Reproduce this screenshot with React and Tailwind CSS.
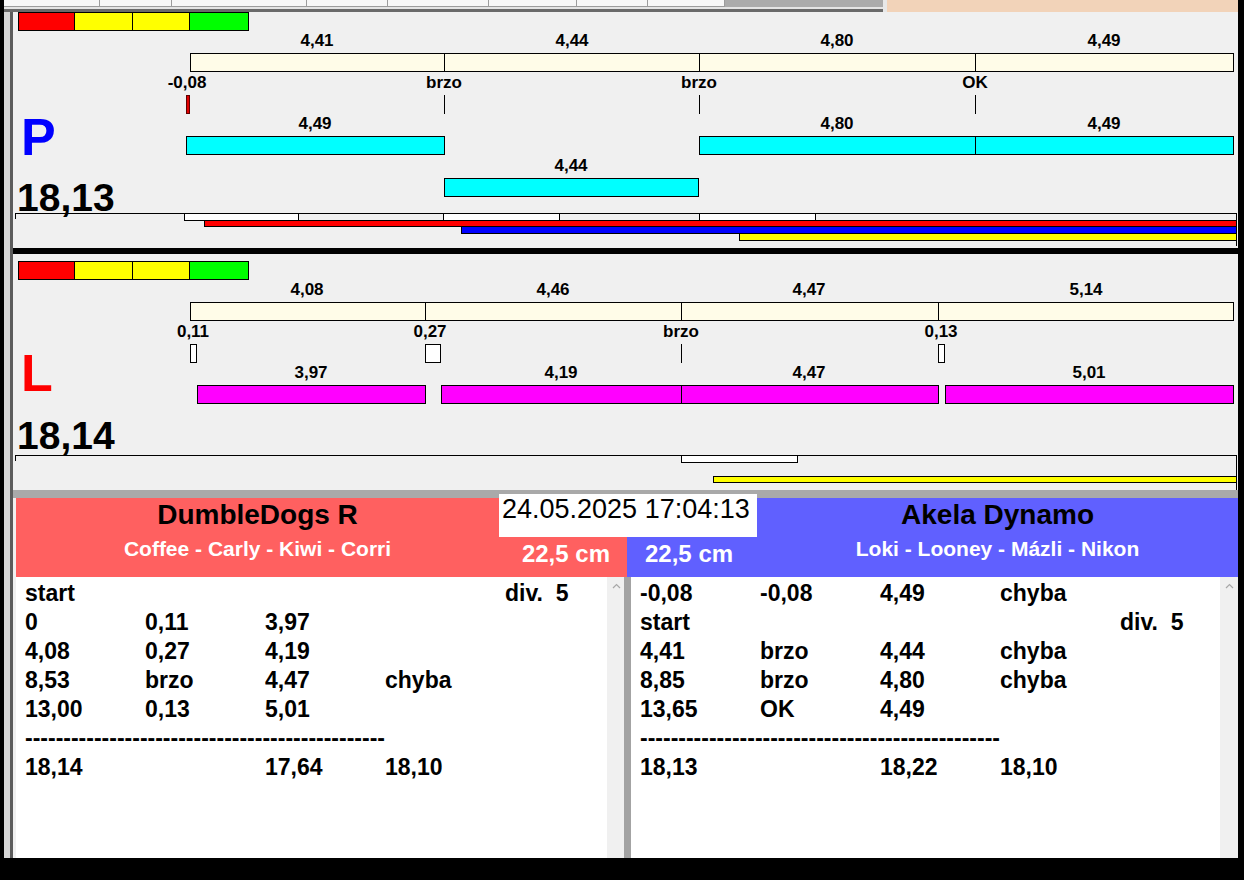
import React from 'react';

// chart panels use page coordinates, shifted by the panel origin
const X0 = 13;

const P_PANEL = {
  y0: 12,
  rects: [
    { x1: 190, x2: 445, y1: 53, y2: 72, c: 'bg-[#fffce8]' },
    { x1: 444, x2: 700, y1: 53, y2: 72, c: 'bg-[#fffce8]' },
    { x1: 699, x2: 976, y1: 53, y2: 72, c: 'bg-[#fffce8]' },
    { x1: 975, x2: 1234, y1: 53, y2: 72, c: 'bg-[#fffce8]' },
    { x1: 186, x2: 190, y1: 95, y2: 114, c: 'bg-[#e00000]', b: 'border border-[#600000]' },
    { x1: 186, x2: 445, y1: 136, y2: 155, c: 'bg-[#00ffff]' },
    { x1: 699, x2: 976, y1: 136, y2: 155, c: 'bg-[#00ffff]' },
    { x1: 975, x2: 1234, y1: 136, y2: 155, c: 'bg-[#00ffff]' },
    { x1: 444, x2: 699, y1: 178, y2: 197, c: 'bg-[#00ffff]' },
    { x1: 15, x2: 1237, y1: 213, y2: 246, b: 'border-t border-r border-black' },
    { x1: 184, x2: 299, y1: 213, y2: 221, c: 'bg-white' },
    { x1: 443, x2: 560, y1: 213, y2: 221, c: 'bg-white' },
    { x1: 699, x2: 816, y1: 213, y2: 221, c: 'bg-white' },
    { x1: 204, x2: 1237, y1: 220, y2: 227, c: 'bg-[#ff0000]' },
    { x1: 461, x2: 1237, y1: 226, y2: 234, c: 'bg-[#0000ff]' },
    { x1: 739, x2: 1237, y1: 233, y2: 241, c: 'bg-[#ffff00]' },
  ],
  ticks: [
    { x: 444, y1: 95, y2: 114 },
    { x: 699, y1: 95, y2: 114 },
    { x: 975, y1: 95, y2: 114 },
    { x: 15, y1: 213, y2: 219 },
  ],
  labels: [
    { x: 317, y: 40, t: '4,41' },
    { x: 572, y: 40, t: '4,44' },
    { x: 837, y: 40, t: '4,80' },
    { x: 1104, y: 40, t: '4,49' },
    { x: 187, y: 82, t: '-0,08' },
    { x: 444, y: 82, t: 'brzo' },
    { x: 699, y: 82, t: 'brzo' },
    { x: 975, y: 82, t: 'OK' },
    { x: 315, y: 123, t: '4,49' },
    { x: 837, y: 123, t: '4,80' },
    { x: 1104, y: 123, t: '4,49' },
    { x: 571, y: 165, t: '4,44' },
  ],
};

const L_PANEL = {
  y0: 254,
  rects: [
    { x1: 190, x2: 426, y1: 302, y2: 321, c: 'bg-[#fffce8]' },
    { x1: 425, x2: 682, y1: 302, y2: 321, c: 'bg-[#fffce8]' },
    { x1: 681, x2: 939, y1: 302, y2: 321, c: 'bg-[#fffce8]' },
    { x1: 938, x2: 1234, y1: 302, y2: 321, c: 'bg-[#fffce8]' },
    { x1: 190, x2: 197, y1: 344, y2: 363, c: 'bg-white' },
    { x1: 425, x2: 441, y1: 344, y2: 363, c: 'bg-white' },
    { x1: 938, x2: 945, y1: 344, y2: 363, c: 'bg-white' },
    { x1: 197, x2: 426, y1: 385, y2: 404, c: 'bg-[#ff00ff]' },
    { x1: 441, x2: 682, y1: 385, y2: 404, c: 'bg-[#ff00ff]' },
    { x1: 681, x2: 939, y1: 385, y2: 404, c: 'bg-[#ff00ff]' },
    { x1: 945, x2: 1234, y1: 385, y2: 404, c: 'bg-[#ff00ff]' },
    { x1: 15, x2: 1237, y1: 455, y2: 490, b: 'border-t border-r border-black' },
    { x1: 681, x2: 798, y1: 455, y2: 463, c: 'bg-white' },
    { x1: 713, x2: 1237, y1: 476, y2: 483, c: 'bg-[#ffff00]' },
  ],
  ticks: [
    { x: 681, y1: 344, y2: 363 },
    { x: 15, y1: 455, y2: 461 },
  ],
  labels: [
    { x: 307, y: 289, t: '4,08' },
    { x: 553, y: 289, t: '4,46' },
    { x: 809, y: 289, t: '4,47' },
    { x: 1086, y: 289, t: '5,14' },
    { x: 193, y: 331, t: '0,11' },
    { x: 430, y: 331, t: '0,27' },
    { x: 681, y: 331, t: 'brzo' },
    { x: 941, y: 331, t: '0,13' },
    { x: 311, y: 372, t: '3,97' },
    { x: 561, y: 372, t: '4,19' },
    { x: 809, y: 372, t: '4,47' },
    { x: 1089, y: 372, t: '5,01' },
  ],
};

const DASHES = '-'.repeat(47);

const LEFT_ROWS = [
  ['start', '', '', '', 'div.  5'],
  ['0', '0,11', '3,97'],
  ['4,08', '0,27', '4,19'],
  ['8,53', 'brzo', '4,47', 'chyba'],
  ['13,00', '0,13', '5,01'],
  [DASHES],
  ['18,14', '', '17,64', '18,10'],
];

const RIGHT_ROWS = [
  ['-0,08', '-0,08', '4,49', 'chyba'],
  ['start', '', '', '', 'div.  5'],
  ['4,41', 'brzo', '4,44', 'chyba'],
  ['8,85', 'brzo', '4,80', 'chyba'],
  ['13,65', 'OK', '4,49'],
  [DASHES],
  ['18,13', '', '18,22', '18,10'],
];

const TABS = [96, 72, 135, 81, 101, 88, 71, 77];

function Rect({ r, y0 }) {
  return (
    <div
      className={`absolute ${r.b || 'border border-black'} ${r.c || ''}`}
      style={{ left: r.x1 - X0, top: r.y1 - y0, width: r.x2 - r.x1, height: r.y2 - r.y1 }}
    />
  );
}

function ColorBar({ className }) {
  return (
    <div className={`absolute left-[5px] flex h-[19px] w-[231px] border border-black ${className}`}>
      <div className="w-[56px] border-r border-black bg-[#ff0000]" />
      <div className="w-[58px] border-r border-black bg-[#ffff00]" />
      <div className="w-[57px] border-r border-black bg-[#ffff00]" />
      <div className="flex-1 bg-[#00ff00]" />
    </div>
  );
}

function ChartPanel({ data, children }) {
  const { y0 } = data;
  return (
    <div className="relative h-[236px] overflow-hidden bg-[#f0f0f0]">
      {data.rects.map((r, i) => (
        <Rect key={i} r={r} y0={y0} />
      ))}
      {data.ticks.map((t, i) => (
        <div
          key={i}
          className="absolute w-px bg-black"
          style={{ left: t.x - X0, top: t.y1 - y0, height: t.y2 - t.y1 }}
        />
      ))}
      {data.labels.map((l, i) => (
        <div
          key={i}
          className="absolute -translate-x-1/2 whitespace-nowrap text-[17px] font-bold leading-none text-black"
          style={{ left: l.x - X0, top: l.y - 8 - y0 }}
        >
          {l.t}
        </div>
      ))}
      {children}
    </div>
  );
}

function ScrollUp() {
  return (
    <svg width="9" height="6" viewBox="0 0 9 6" className="mt-[6px] ml-[1px]">
      <path d="M1 5 L4.5 1.5 L8 5" fill="none" stroke="#a8a8a8" strokeWidth="1.2" />
    </svg>
  );
}

function ResultList({ rows, className }) {
  return (
    <div className={`bg-white pl-[9px] pt-[2px] text-[23px] font-bold text-black ${className}`}>
      {rows.map((row, i) => (
        <div key={i} className="flex h-[29px] leading-[29px]">
          {row.length === 1 ? (
            <span className="whitespace-pre">{row[0]}</span>
          ) : (
            row.map((cell, j) => (
              <span key={j} className="w-[120px] shrink-0 whitespace-pre">
                {cell}
              </span>
            ))
          )}
        </div>
      ))}
    </div>
  );
}

export default function App() {
  return (
    <div className="flex h-[880px] w-[1244px] flex-col overflow-hidden bg-black font-['Liberation_Sans',Arial,sans-serif]">
      <div className="flex h-[858px]">
        <div className="w-[4px]" />
        <div className="flex w-[1234px] flex-col">
          {/* tab strip of the window */}
          <div className="flex h-[12px]">
            <div className="flex w-[879px] flex-col">
              <div className="flex h-[7px]">
                <div className="flex border-b border-[#9c9c9c] bg-[#f7f7f7]">
                  {TABS.map((w, i) => (
                    <div key={i} className="border-r border-[#9c9c9c]" style={{ width: w }} />
                  ))}
                </div>
                <div className="flex-1 bg-[#ababab]" />
              </div>
              <div className="h-[2px] bg-[#e4e4e4]" />
              <div className="h-[3px] bg-[#6a6a6a]" />
            </div>
            <div className="w-[4px] bg-[#e8e8e8]" />
            <div className="flex-1 bg-[#f2d3b9]" />
          </div>

          <div className="flex flex-1">
            <div className="w-[6px] bg-[#d6d6d6]" />
            <div className="w-[3px] bg-[#5c5c5c]" />
            <div className="flex w-[1225px] flex-col">
              <ChartPanel data={P_PANEL}>
                <ColorBar className="top-0" />
                <div className="absolute left-[8px] top-[99px] text-[52px] font-bold leading-none text-[#0000ff]">P</div>
                <div className="absolute left-[4px] top-[166px] text-[39px] font-bold leading-none text-black">18,13</div>
              </ChartPanel>
              <div className="h-[6px] bg-black" />
              <ChartPanel data={L_PANEL}>
                <ColorBar className="top-[7px]" />
                <div className="absolute left-[8px] top-[93px] text-[52px] font-bold leading-none text-[#ff0000]">L</div>
                <div className="absolute left-[4px] top-[162px] text-[39px] font-bold leading-none text-black">18,14</div>
              </ChartPanel>
              <div className="h-[8px] bg-[#a9a9a9]" />

              <div className="flex flex-1 flex-col bg-[#f0f0f0] pl-[3px]">
                {/* team headers */}
                <div className="relative flex h-[79px]">
                  <div className="flex w-[611px] bg-[#ff6060]">
                    <div className="flex w-[483px] flex-col items-center pt-[1px]">
                      <div className="text-[28px] font-bold leading-[32px] text-black">DumbleDogs R</div>
                      <div className="mt-[6px] text-[21px] font-bold leading-[24px] text-white">Coffee - Carly - Kiwi - Corri</div>
                    </div>
                    <div className="flex-1 pr-[17px] pt-[42px] text-right text-[24px] font-bold leading-[28px] text-white">22,5 cm</div>
                  </div>
                  <div className="flex flex-1 bg-[#6060ff]">
                    <div className="w-[130px] pl-[18px] pt-[42px] text-[24px] font-bold leading-[28px] text-white">22,5 cm</div>
                    <div className="flex flex-1 flex-col items-center pt-[1px]">
                      <div className="text-[28px] font-bold leading-[32px] text-black">Akela Dynamo</div>
                      <div className="mt-[6px] text-[21px] font-bold leading-[24px] text-white">Loki - Looney - Mázli - Nikon</div>
                    </div>
                  </div>
                  <div className="absolute left-[483px] top-[-4px] h-[43px] w-[258px] bg-white pl-[3px] text-[27px] leading-[30px] text-black">
                    24.05.2025 17:04:13
                  </div>
                </div>

                {/* result lists */}
                <div className="flex flex-1">
                  <ResultList rows={LEFT_ROWS} className="w-[591px]" />
                  <div className="flex w-[17px] justify-center bg-[#f0f0f0]">
                    <ScrollUp />
                  </div>
                  <div className="w-[7px] bg-[#a3a3a3]" />
                  <ResultList rows={RIGHT_ROWS} className="w-[589px]" />
                  <div className="flex flex-1 justify-center bg-[#f0f0f0]">
                    <ScrollUp />
                  </div>
                </div>
              </div>
            </div>
          </div>
        </div>
        <div className="flex-1" />
      </div>
    </div>
  );
}
